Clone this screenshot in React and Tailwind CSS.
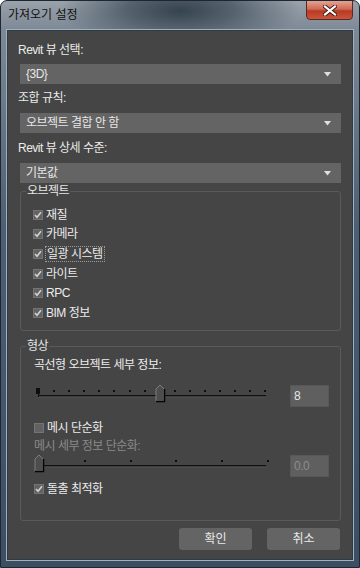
import React from "react";

const font = { fontFamily: "'Liberation Sans', 'Noto Sans CJK KR', sans-serif" };

const Check = ({ checked }) => (
  <span className="flex h-[10px] w-[10px] shrink-0 items-center justify-center border border-[#747474] bg-[#626262]">
    {checked && (
      <svg width="8" height="8" viewBox="0 0 8 8">
        <path d="M1 4 L3 6.2 L7 1.2" fill="none" stroke="#d2d2d2" strokeWidth="1.6" />
      </svg>
    )}
  </span>
);

const CheckRow = ({ label, checked = true, focus, className = "h-[19.6px]" }) => (
  <div className={`flex items-center gap-[3px] ${className}`}>
    <Check checked={checked} />
    <span className={focus ? "outline outline-1 outline-dotted outline-[#9a9a9a] px-[1px] leading-[14px]" : ""}>
      {label}
    </span>
  </div>
);

const Select = ({ value }) => (
  <div className="flex h-[20px] items-center justify-between bg-[#646464] pl-[6px] pr-[10px] text-[#e6e6e6]">
    <span>{value}</span>
    <svg width="7" height="5" viewBox="0 0 7 5">
      <path d="M0 0 H7 L3.5 4.5 Z" fill="#e0e0e0" />
    </svg>
  </div>
);

const Group = ({ title, className, children }) => (
  <div className={`relative rounded-[3px] border border-[#5a5a5a] ${className}`}>
    <span className="absolute left-[5px] top-[-9px] bg-[#454545] px-[1px] leading-[16px] text-[#e8e8e8]">
      {title}
    </span>
    {children}
  </div>
);

// slider drawn as svg, 235 x 22
const Slider = ({ ticks, thumbX, startMark }) => (
  <svg width="235" height="22" viewBox="0 0 235 22">
    {ticks.map((x, i) => (
      <rect key={i} x={x} y="5" width="2" height="2" fill="#0d0d0d" />
    ))}
    {startMark && <rect x="2" y="3" width="4" height="6" fill="#0d0d0d" />}
    <rect x="4" y="10" width="228" height="1.5" fill="#101010" />
    <rect x="4" y="11.5" width="228" height="1" fill="#555" />
    <rect x="4" y="8" width="1" height="4" fill="#101010" />
    <path
      d={`M${thumbX} 0 L${thumbX + 4} 4 L${thumbX + 4} 16 L${thumbX - 4} 16 L${thumbX - 4} 4 Z`}
      fill="#4d4d4d"
      stroke="#8a8a8a"
      strokeWidth="0.8"
    />
    <path
      d={`M${thumbX + 4.5} 4 L${thumbX + 4.5} 16.5 L${thumbX - 4} 16.5`}
      fill="none"
      stroke="#050505"
      strokeWidth="1.5"
    />
  </svg>
);

const NumBox = ({ value, disabled }) => (
  <div
    className={`h-[22px] w-[39px] border border-[#585858] bg-[#5f5f5f] pl-[3px] pt-[2px] leading-[16px] ${
      disabled ? "text-[#8c8c8c]" : "text-[#e8e8e8]"
    }`}
  >
    {value}
  </div>
);

export default function App() {
  const ticks1 = Array.from({ length: 15 }, (_, i) => Math.round(19 + i * 15.1));
  const ticks2 = [50, 96, 141, 187, 233];

  return (
    <div
      className="relative flex h-[568px] w-[360px] flex-col overflow-hidden rounded-t-[7px] border border-[#1d2631] bg-[linear-gradient(180deg,#9aa2aa_0%,#7d8996_5%,#4d5f72_40%,#3c4e62_100%)] text-[12px] tracking-[-0.5px] text-[#ececec]"
      style={font}
    >
      {/* title bar */}
      <div className="relative flex h-[28px] shrink-0 items-center bg-[radial-gradient(ellipse_120px_40px_at_50%_35%,#36444f_0%,#56636f_45%,rgba(150,158,166,0)_100%)] pl-[7px]">
        <span className="text-[12px] tracking-normal text-[#111]">가져오기 설정</span>
        <div className="absolute right-[6px] top-[-1px] flex h-[20px] w-[47px] items-center justify-center rounded-b-[4px] border border-[#5a2a22] bg-[linear-gradient(180deg,#e4a392_0%,#cf6a55_45%,#b83a22_55%,#c9553a_100%)]">
          <svg width="14" height="11" viewBox="0 0 14 11">
            <path d="M2 1.5 L12 9.5 M12 1.5 L2 9.5" stroke="#3a1a14" strokeWidth="4" strokeLinecap="square" />
            <path d="M2 1.5 L12 9.5 M12 1.5 L2 9.5" stroke="#ffffff" strokeWidth="2.2" strokeLinecap="square" />
          </svg>
        </div>
      </div>

      {/* client area */}
      <div className="mx-[5px] mb-[6px] flex flex-1 flex-col border border-[#a2afbc] bg-[#454545]">
        <div className="flex flex-1 flex-col border border-[#2e3a46] pl-[12px] pr-[11px] pt-[11px]">
          <div className="h-[16px] leading-[16px]">
            <span className="-ml-[2px]">Revit 뷰 선택:</span>
          </div>
          <div className="mt-[6px]">
            <Select value="{3D}" />
          </div>
          <div className="mt-[6px] h-[16px] leading-[16px]">
            <span className="-ml-[2px]">조합 규칙:</span>
          </div>
          <div className="mt-[7px]">
            <Select value="오브젝트 결합 안 함" />
          </div>
          <div className="mt-[7px] h-[16px] leading-[16px]">
            <span className="-ml-[2px]">Revit 뷰 상세 수준:</span>
          </div>
          <div className="mt-[7px]">
            <Select value="기본값" />
          </div>

          <Group title="오브젝트" className="mt-[8px] h-[140px] pl-[12px] pt-[13px]">
            <CheckRow label="재질" />
            <CheckRow label="카메라" />
            <CheckRow label="일광 시스템" focus />
            <CheckRow label="라이트" />
            <CheckRow label="RPC" />
            <CheckRow label="BIM 정보" />
          </Group>

          <Group title="형상" className="mt-[15px] h-[175px] pl-[13px] pt-[10px]">
            <div className="h-[16px] leading-[16px]">곡선형 오브젝트 세부 정보:</div>
            <div className="mt-[12px] flex items-start">
              <Slider ticks={ticks1} thumbX={126} startMark />
              <div className="ml-[21px]">
                <NumBox value="8" />
              </div>
            </div>
            <CheckRow label="메시 단순화" checked={false} className="mt-[11px] h-[20px]" />
            <div className="h-[16px] leading-[16px] text-[#8a8a8a]">메시 세부 정보 단순화:</div>
            <div className="mt-[1px] flex items-start">
              <Slider ticks={ticks2} thumbX={5} />
              <div className="ml-[21px]">
                <NumBox value="0.0" disabled />
              </div>
            </div>
            <CheckRow label="돌출 최적화" className="mt-[2px] h-[20px]" />
          </Group>

          <div className="mt-[7px] flex justify-end gap-[15px] pr-[1px] tracking-normal">
            <button className="h-[22px] w-[73px] rounded-[3px] bg-[#646464] text-[#e8e8e8]">확인</button>
            <button className="h-[22px] w-[73px] rounded-[3px] bg-[#646464] text-[#e8e8e8]">취소</button>
          </div>
        </div>
      </div>
    </div>
  );
}
